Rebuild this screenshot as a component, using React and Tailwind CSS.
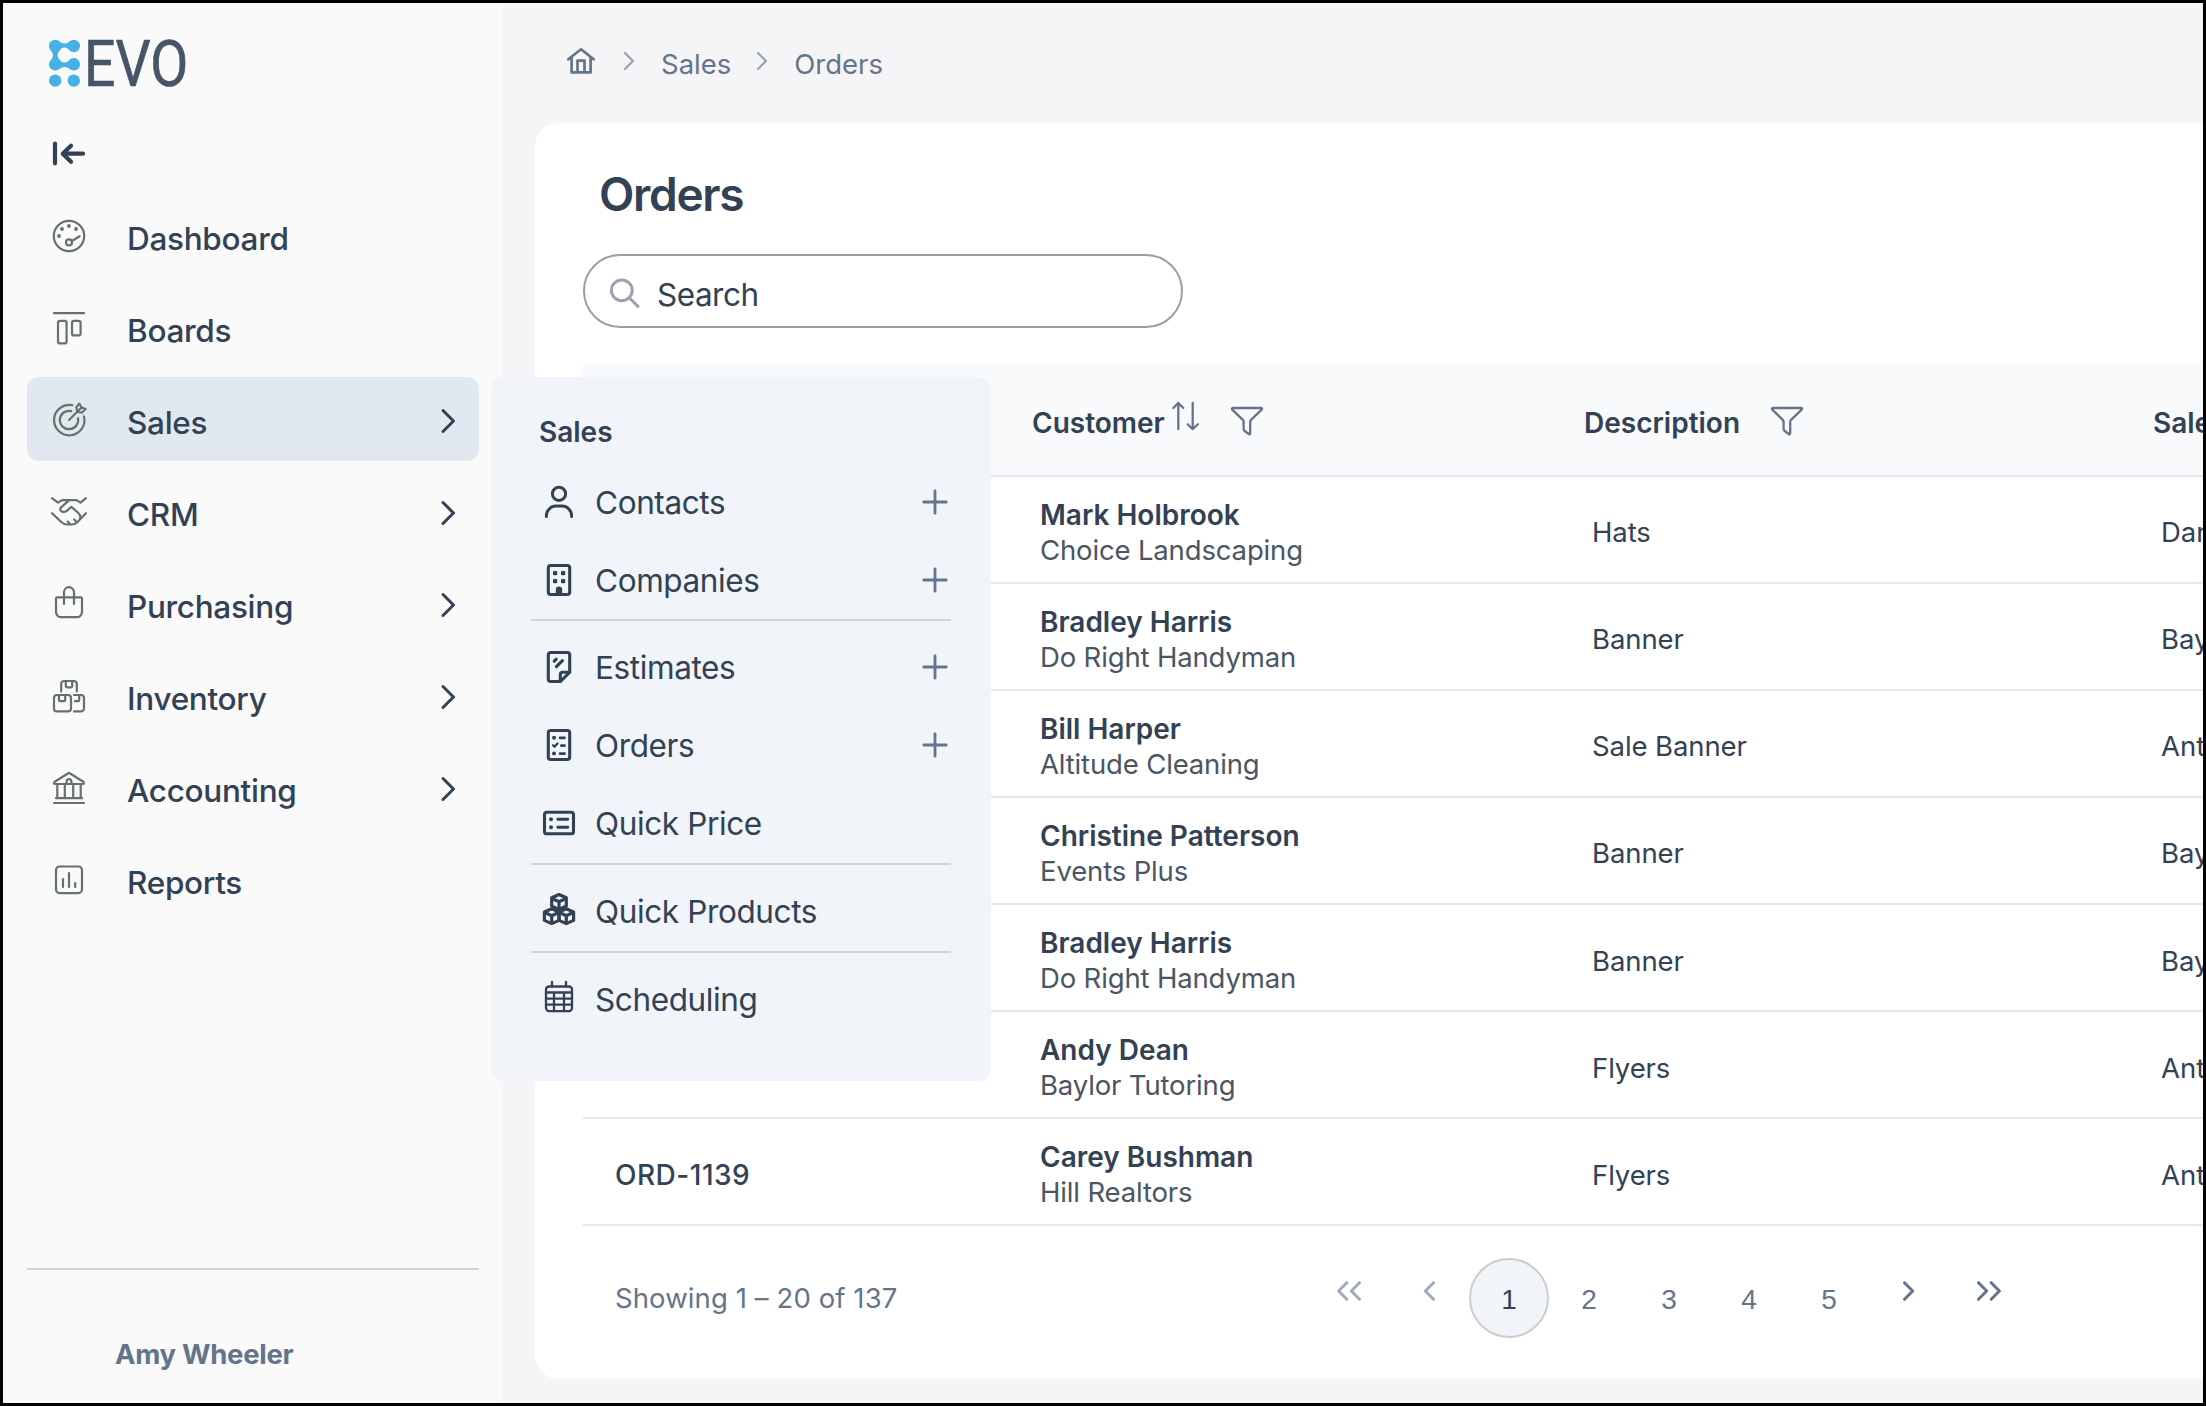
import React from 'react';

const Icon = ({ children, width = 2.2, size = 32, className = '' }) => (
  <svg
    width={size}
    height="32"
    viewBox={`0 0 ${size} 32`}
    fill="none"
    stroke="currentColor"
    strokeWidth={width}
    strokeLinecap="round"
    strokeLinejoin="round"
    className={`shrink-0 overflow-visible ${className}`}
  >
    {children}
  </svg>
);

const GaugeIcon = () => (
  <Icon>
    <circle cx="16" cy="16" r="15.2" />
    <circle cx="16" cy="22.4" r="3" />
    <path d="M18.8 21 26.7 16.3" />
    <g fill="currentColor" stroke="none">
      <circle cx="15.9" cy="6" r="1.9" />
      <circle cx="9" cy="9" r="1.9" />
      <circle cx="23" cy="9" r="1.9" />
      <circle cx="6" cy="16" r="1.9" />
    </g>
  </Icon>
);

const BoardsIcon = () => (
  <Icon>
    <path d="M1 1.2h30" />
    <rect x="5" y="8.8" width="8.6" height="22.6" rx="2" />
    <rect x="19" y="8.8" width="8.6" height="14.6" rx="2" />
  </Icon>
);

const TargetIcon = () => (
  <Icon>
    <path d="M19.3 1.2A15.2 15.2 0 1 0 31 12.4" />
    <path d="M18.3 7.1A9.2 9.2 0 1 0 25 14" />
    <path d="M16 16 28 4" />
    <path d="M26.3-.4 23.3 3.2 24.3 7.7 28.8 8.7 32.6 5 28.6 3.5z" />
  </Icon>
);

const HandshakeIcon = () => (
  <Icon size={36}>
    <path d="M1 2.2 7 6.6l2.4-1.5c.8-.6 1.8-.9 2.8-.9h12.2c1 0 2 .3 2.8.9l2.3 1.5L35 2.2" />
    <path d="M17.8 4.4 9.9 11.6c-1.2 1.2-.8 3.2.8 3.9 1.6.7 3.4.5 4.8-.4l4.9-4.3 7.2 6.5c1.4 1.4 2.2 3 1.6 5.1" />
    <path d="m1 17.2 9.3 8.8c1.8 1.6 3.4 2.5 5.5 2.5h4.6c2.6 0 4.2-.6 5.8-2.2L35 17.2" />
    <path d="m16.7 25.6 2.3 2.6M23.2 23.4l2.6 3" />
  </Icon>
);

const BagIcon = () => (
  <Icon className="-mt-1">
    <path d="M4.2 11.4h23.6c.7 0 1.2.5 1.2 1.2V26a5.2 5.2 0 0 1-5.2 5.2H8.2A5.2 5.2 0 0 1 3 26V12.6c0-.7.5-1.2 1.2-1.2z" />
    <path d="M11 18V6.2a5 5 0 0 1 10 0V18" />
  </Icon>
);

const BoxesIcon = () => (
  <Icon>
    <path d="M8.2 11.5V4a3 3 0 0 1 3-3h9.6a3 3 0 0 1 3 3v7.5" />
    <path d="M12.8 1v4.8c0 .9.6 1.5 1.5 1.5h3.4c.9 0 1.5-.6 1.5-1.5V1" />
    <rect x="1" y="15" width="17" height="16.4" rx="3" />
    <path d="M6 15v4.8c0 .8.6 1.4 1.4 1.4h3.4c.8 0 1.4-.6 1.4-1.4V15" />
    <path d="M21 15h7a3 3 0 0 1 3 3v10.4a3 3 0 0 1-3 3h-7" />
    <path d="M22 21.2h2.8c.8 0 1.4-.6 1.4-1.4V15" />
  </Icon>
);

const BankIcon = () => (
  <Icon>
    <path d="M15.3 1.2 1.7 9.7c-.9.6-.9 2.3.4 2.3h27.8c1.3 0 1.3-1.7.4-2.3L16.7 1.2c-.4-.3-1-.3-1.4 0z" />
    <path d="M4.3 12v14M11.8 12v14M20.2 12v14M27.7 12v14M3 26.2h26M1 31h30" />
    <path d="M13.6 12V9.6a2.4 2.4 0 0 1 4.8 0V12" />
  </Icon>
);

const ReportsIcon = () => (
  <Icon>
    <rect x="3" y="2.5" width="26" height="26.6" rx="3.6" />
    <path d="M10 15v8M16 9v14M22.2 19v4" />
  </Icon>
);

const UserIcon = () => (
  <Icon width={3}>
    <circle cx="16" cy="7.8" r="6.6" />
    <path d="M3.4 30.6v-.8a9.7 9.7 0 0 1 9.7-9.7h5.8a9.7 9.7 0 0 1 9.7 9.7v.8" />
  </Icon>
);

const BuildingIcon = () => (
  <Icon width={3.1}>
    <rect x="5.3" y="1.5" width="21.4" height="29" rx="2.4" />
    <g fill="currentColor" stroke="none">
      <rect x="10" y="7" width="4.2" height="4.2" rx="1" />
      <rect x="18" y="7" width="4.2" height="4.2" rx="1" />
      <rect x="10" y="15" width="4.2" height="4.2" rx="1" />
      <rect x="18" y="15" width="4.2" height="4.2" rx="1" />
      <path d="M12.8 31v-5.3a3.2 3.2 0 0 1 6.4 0V31z" />
    </g>
  </Icon>
);

const EstimateIcon = () => (
  <Icon width={3.1}>
    <path d="M17.5 30.5H7.7a2.4 2.4 0 0 1-2.4-2.4V3.9a2.4 2.4 0 0 1 2.4-2.4h16.6a2.4 2.4 0 0 1 2.4 2.4V21.2z" />
    <path d="M17.3 30.2v-6.6c0-1.4.9-2.3 2.3-2.3h7" />
    <path d="m11.2 10.2 2-2M13.4 15.6 19.4 9.6" />
  </Icon>
);

const OrderIcon = () => (
  <Icon width={3.1}>
    <rect x="5.3" y="1.5" width="21.4" height="29" rx="2.4" />
    <path d="M17 8.8h4.6M18.3 16.6h3.3M17 24.6h4.6" strokeWidth="2.7" />
    <path d="m10 16.3 1.5 1.5 3-3.3" strokeWidth="2.3" />
    <circle cx="11" cy="8.8" r="2" fill="currentColor" stroke="none" />
    <circle cx="11" cy="24.6" r="2" fill="currentColor" stroke="none" />
  </Icon>
);

const PriceIcon = () => (
  <Icon width={3.1}>
    <rect x="1.5" y="5.2" width="29" height="21.6" rx="2.4" />
    <path d="M14.8 12.2h10M14.8 20.2h10" strokeWidth="2.9" />
    <circle cx="8" cy="12.2" r="2" fill="currentColor" stroke="none" />
    <circle cx="8" cy="20.2" r="2" fill="currentColor" stroke="none" />
  </Icon>
);

const CubesIcon = () => (
  <Icon width={3.2} className="-mt-1">
    <path d="M16 1.5 23.3 4.8V13L16 16.7 8.7 13V4.8zM8.7 5.3 16 8.8l7.3-3.5M16 8.8v7.5" />
    <path d="M8.7 15.8 16 19v8.4l-7.3 3.2L1.4 27.4V19zM1.6 19.3l7.1 3.4 7.3-3.4M8.7 22.7v7.5" />
    <path d="M23.3 15.8 30.6 19v8.4l-7.3 3.2L16 27.4V19zM16 19.3l7.3 3.4 7.1-3.4M23.3 22.7v7.5" />
  </Icon>
);

const CalendarIcon = () => (
  <Icon width={2.3} className="-mt-1">
    <rect x="3" y="5.5" width="26" height="24.6" rx="3" />
    <path d="M9 1v4.5M23 1v4.5M3 11.5h26M3 17.7h26M3 23.7h26M11 11.5v18.5M21 11.5v18.5" />
  </Icon>
);

const FilterIcon = () => (
  <Icon width={2.3} className="text-[#64748b]">
    <path d="M2 3h28c1 0 1.3 1 .7 1.6L20 14.9c-.6.5-.8 1-.8 1.8v11.6c0 .8-.8 1.2-1.4.7l-4.4-3.2c-.5-.5-.8-1-.8-1.7v-7.4c0-.8-.3-1.3-.8-1.8L1.3 4.6C.7 4 1 3 2 3z" />
  </Icon>
);

const SortIcon = () => (
  <Icon width={2.3} className="text-[#64748b]">
    <path d="M8.3 29.2V3M3.3 8l5-5 5 5M22.7 3v26.2M17.6 24.2l5.1 5 5.1-5" />
  </Icon>
);

const HomeIcon = () => (
  <Icon width={2.7} className="text-[#64748b]">
    <path d="M3.3 14.3 16 4.3l12.7 10M6.6 12v15.4h19V12M12.5 27.4V15.6h7v11.8" />
  </Icon>
);

const Chevron = ({ flip, double }) => (
  <svg
    width={double ? 24 : 12}
    height="20"
    viewBox={double ? '0 0 24 20' : '0 0 12 20'}
    fill="none"
    stroke="currentColor"
    strokeWidth="3"
    strokeLinecap="round"
    strokeLinejoin="round"
    className={flip ? 'rotate-180' : ''}
  >
    <path d="M1.5 1.7 9.7 10l-8.2 8.3" />
    {double && <path d="m14.2 1.7 8.2 8.3-8.2 8.3" />}
  </svg>
);

const Crumb = () => (
  <svg width="12" height="20" viewBox="0 0 12 20" fill="none" stroke="#94a3b8" strokeWidth="2.2" strokeLinecap="round" strokeLinejoin="round">
    <path d="m2 2 8 8-8 8" />
  </svg>
);

const navItems = [
  { label: 'Dashboard', icon: GaugeIcon },
  { label: 'Boards', icon: BoardsIcon },
  { label: 'Sales', icon: TargetIcon, more: true, active: true },
  { label: 'CRM', icon: HandshakeIcon, more: true },
  { label: 'Purchasing', icon: BagIcon, more: true },
  { label: 'Inventory', icon: BoxesIcon, more: true },
  { label: 'Accounting', icon: BankIcon, more: true },
  { label: 'Reports', icon: ReportsIcon },
];

const salesMenu = [
  [
    { label: 'Contacts', icon: UserIcon, add: true },
    { label: 'Companies', icon: BuildingIcon, add: true },
  ],
  [
    { label: 'Estimates', icon: EstimateIcon, add: true },
    { label: 'Orders', icon: OrderIcon, add: true },
    { label: 'Quick Price', icon: PriceIcon },
  ],
  [{ label: 'Quick Products', icon: CubesIcon }],
  [{ label: 'Scheduling', icon: CalendarIcon }],
];

const orders = [
  { name: 'Mark Holbrook', company: 'Choice Landscaping', description: 'Hats', rep: 'Dan' },
  { name: 'Bradley Harris', company: 'Do Right Handyman', description: 'Banner', rep: 'Baylor' },
  { name: 'Bill Harper', company: 'Altitude Cleaning', description: 'Sale Banner', rep: 'Anthony' },
  { name: 'Christine Patterson', company: 'Events Plus', description: 'Banner', rep: 'Baylor' },
  { name: 'Bradley Harris', company: 'Do Right Handyman', description: 'Banner', rep: 'Baylor' },
  { name: 'Andy Dean', company: 'Baylor Tutoring', description: 'Flyers', rep: 'Anthony' },
  { number: 'ORD-1139', name: 'Carey Bushman', company: 'Hill Realtors', description: 'Flyers', rep: 'Anthony' },
];

const Logo = () => (
  <div className="flex h-[49px] items-center pl-[22px]">
    <svg width="31" height="49" viewBox="0 0 31 49" fill="#46b1e6">
      <circle cx="6.2" cy="7" r="6.2" />
      <circle cx="24.8" cy="7" r="6.2" />
      <circle cx="6.2" cy="25.3" r="6.2" />
      <circle cx="24.8" cy="25.3" r="6.2" />
      <circle cx="6.2" cy="41.6" r="6.2" />
      <circle cx="24.8" cy="41.6" r="6.2" />
      <path d="M9.5 1.8c3.4 3.6 8.6 3.6 12 0v10.4c-3.4-4.8-8.6-4.8-12 0z" />
      <path d="M9.5 20c3.4 4.6 8.6 4.6 12 0v10.6c-3.4-3.6-8.6-3.6-12 0z" />
      <path d="M.9 10.2c4 4.2 4 7.7 0 12h10.8c-4-4.3-4-7.8 0-12z" />
    </svg>
    <span className="ml-1 inline-block origin-left scale-x-[0.85] pt-px font-[Roboto] text-[65px] leading-[49px] text-[#475569] [-webkit-text-stroke:0.7px]">
      EVO
    </span>
  </div>
);

const SalesFlyout = () => (
  <div className="absolute top-0 left-[464px] z-10 h-[704px] w-[500px] rounded-xl bg-[#f1f4f9] px-10 pt-[37px]">
    <h2 className="mb-[13px] pl-2 text-[28px] leading-[37px] font-semibold">Sales</h2>
    {salesMenu.map((group, i) => (
      <div key={i} className={i > 0 ? '-mt-px mb-px border-t-2 border-[#cbd5e1] pt-2' : ''}>
        {group.map(({ label, icon: ItemIcon, add }) => (
          <div key={label} className="flex h-[78px] items-center pl-3">
            <span className="-mt-[2px]"><ItemIcon /></span>
            <span className="ml-5 flex-1 text-[31.5px] tracking-[-0.38px]">{label}</span>
            {add && (
              <svg width="26" height="26" viewBox="0 0 26 26" stroke="#64748b" strokeWidth="2.8" strokeLinecap="round" className="-mt-[3px] mr-[3px]">
                <path d="M13 1.8v22.4M1.8 13h22.4" />
              </svg>
            )}
          </div>
        ))}
      </div>
    ))}
  </div>
);

const Sidebar = () => (
  <aside className="flex w-[500px] shrink-0 flex-col bg-[#fafafa] px-6 pt-[36px]">
    <Logo />
    <button className="mt-[50px] mb-[23px] h-8 pl-[25px]">
      <svg width="34" height="32" viewBox="0 0 34 32" fill="none" stroke="currentColor" strokeWidth="4.2" strokeLinecap="round" strokeLinejoin="round">
        <path d="M3 5.7v19.6M31 15.7H11M19 7.7l-8.3 8 8.3 8" />
      </svg>
    </button>
    <nav className="flex flex-col gap-2">
      {navItems.map(({ label, icon: ItemIcon, more, active }) => (
        <div key={label} className={`relative flex h-[84px] items-center rounded-xl pr-[23px] ${active ? 'bg-[#e1e8f0]' : ''}`}>
          <span className="flex w-[84px] justify-center pt-[2px] text-[#65716b]">
            <ItemIcon />
          </span>
          <span className="ml-4 flex-1 pt-[7px] text-[31.5px] font-medium tracking-[-0.3px]">{label}</span>
          {more && (
            <svg width="16" height="26" viewBox="0 0 16 26" fill="none" stroke="currentColor" strokeWidth="3" strokeLinecap="round" strokeLinejoin="round" className="mt-1">
              <path d="m3 2.5 10.5 10.5L3 23.5" />
            </svg>
          )}
          {active && <SalesFlyout />}
        </div>
      ))}
    </nav>
    <div className="mt-auto h-[135px] border-t-2 border-[#c9d6e4] pt-[66px] pl-[88px] text-[27.5px] leading-9 font-bold tracking-[-0.3px] text-[#64748b]">
      Amy Wheeler
    </div>
  </aside>
);

const OrdersTable = () => (
  <div className="mt-[35px] w-max">
    <div className="grid h-[113.5px] grid-cols-[449px_552px_569px_300px] items-center border-b-2 border-[#e2e8f0] bg-[#f9fafc] text-[28px] font-semibold">
      <div />
      <div className="flex items-center">
        <span className="pt-[8px]">Customer</span>
        <span className="ml-[5px] -mt-[6px]"><SortIcon /></span>
        <span className="ml-[29px] pt-1"><FilterIcon /></span>
      </div>
      <div className="flex items-center">
        <span className="pt-[8px]">Description</span>
        <span className="ml-[31px] pt-1"><FilterIcon /></span>
      </div>
      <span className="pt-[8px]">Salesperson</span>
    </div>
    {orders.map((order, i) => (
      <div key={i} className="grid h-[107.15px] grid-cols-[449px_552px_569px_300px] items-center border-b-2 border-[#e2e8f0] pt-[7px] text-[27.5px]">
        <span className="pl-8 text-[28px] font-medium tracking-[0.5px]">{order.number}</span>
        <div className="pl-2 leading-[35px]">
          <p className="text-[28px] font-semibold">{order.name}</p>
          <p className="tracking-[-0.15px] text-[#4b5563]">{order.company}</p>
        </div>
        <span className="pl-2 tracking-[-0.1px]">{order.description}</span>
        <span className="pl-2">{order.rep}</span>
      </div>
    ))}
  </div>
);

const Pagination = () => (
  <div className="mt-8 flex h-20 items-center pl-8 text-[#64748b]">
    <span className="w-[694px] text-[27.5px] tracking-[0.1px]">Showing 1 – 20 of 137</span>
    <div className="flex font-['Liberation_Sans',sans-serif] text-[28px]">
      <button className="flex size-20 items-center justify-center pb-[14px] text-[#a0acbc]"><Chevron flip double /></button>
      <button className="flex size-20 items-center justify-center pb-[14px] text-[#a0acbc]"><Chevron flip /></button>
      <button className="flex size-20 items-center justify-center rounded-full border-2 border-[#cccccc] bg-[#f1f4f9] pt-[3px] text-[#334155]">1</button>
      {[2, 3, 4, 5].map((page) => (
        <button key={page} className="flex size-20 items-center justify-center pt-[3px]">{page}</button>
      ))}
      <button className="flex size-20 items-center justify-center pb-[14px]"><Chevron /></button>
      <button className="flex size-20 items-center justify-center pb-[14px]"><Chevron double /></button>
    </div>
  </div>
);

export default function App() {
  return (
    <div className="flex h-[1406px] w-[2206px] overflow-hidden border-[3px] border-black bg-[#f5f5f8] font-[Inter,sans-serif] text-[#334155]">
      <Sidebar />
      <main className="min-w-0 flex-1 pl-8">
        <div className="flex h-[120px] items-center pb-[5px] pl-[30px] text-[27.5px] text-[#64748b]">
          <HomeIcon />
          <span className="ml-[26px] flex"><Crumb /></span>
          <span className="ml-[26px] pt-[8px]">Sales</span>
          <span className="ml-[25px] flex"><Crumb /></span>
          <span className="ml-[26px] pt-[8px]">Orders</span>
        </div>
        <section className="h-[1256px] overflow-hidden rounded-l-3xl bg-white pt-[39px] pl-12">
          <h1 className="h-16 pl-4 text-[46px] leading-[64px] font-semibold tracking-[-1.3px]">Orders</h1>
          <div className="mt-7 flex h-[74px] w-[600px] items-center rounded-full border-2 border-[#9e9e9e] pl-6">
            <svg width="32" height="32" viewBox="0 0 32 32" fill="none" stroke="#9ca3af" strokeWidth="3" strokeLinecap="round" className="mt-1">
              <circle cx="12.8" cy="13.3" r="10.4" />
              <path d="m20.7 21.2 8.3 8.2" />
            </svg>
            <span className="ml-4 pt-[7px] text-[31.5px] tracking-[-0.5px]">Search</span>
          </div>
          <OrdersTable />
          <Pagination />
        </section>
      </main>
    </div>
  );
}
